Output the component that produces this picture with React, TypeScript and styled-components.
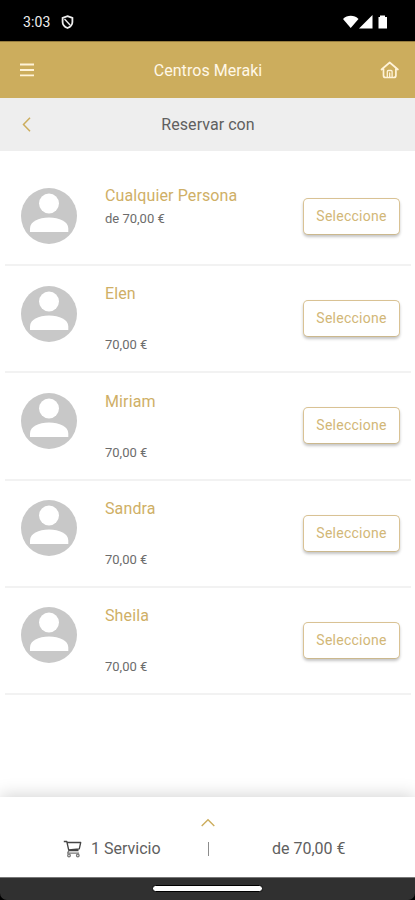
import React from "react";
import styled, { createGlobalStyle } from "styled-components";

const GlobalStyle = createGlobalStyle`
  * { box-sizing: border-box; }
  body { margin: 0; background: #fff; font-family: Roboto, "Liberation Sans", sans-serif; }
`;

const gold = "#ccad5d";
const goldText = "#cfaf66";

const Screen = styled.div`
  width: 415px;
  height: 900px;
  display: flex;
  flex-direction: column;
  background: #fff;
  overflow: hidden;
`;

const StatusBar = styled.div`
  height: 41px;
  flex: none;
  display: flex;
  align-items: center;
  padding: 2px 26px 0 23px;
  background: #000;
  color: #fff;
`;

const Clock = styled.span`
  width: 38px;
  font-size: 14px;
  line-height: 16px;
  letter-spacing: 0.1px;
  color: #eee;
`;

const StatusIcons = styled.div`
  display: flex;
  align-items: center;
  margin-left: auto;
`;

const TopBar = styled.header<{ $tone: "gold" | "grey" }>`
  height: ${(p) => (p.$tone === "gold" ? 57 : 53)}px;
  flex: none;
  display: grid;
  grid-template-columns: 61px 1fr 60px;
  align-items: center;
  background: ${(p) => (p.$tone === "gold" ? gold : "#eeeeee")};
  border-top: ${(p) => (p.$tone === "gold" ? "1px solid #967d40" : "none")};
  color: ${(p) => (p.$tone === "gold" ? "#fff8e8" : "#606060")};
`;

const Title = styled.h1`
  margin: 0;
  padding-top: 1px;
  font-size: 16px;
  font-weight: 400;
  line-height: 20px;
  text-align: center;
  letter-spacing: 0.05px;
`;

const IconSlot = styled.span<{ $left: number }>`
  display: flex;
  padding-left: ${(p) => p.$left}px;
`;

const List = styled.ul`
  flex: 1;
  margin: 0;
  padding: 17px 4px 0 5px;
  list-style: none;
`;

const Row = styled.li<{ $short?: boolean }>`
  height: ${(p) => (p.$short ? 98 : 107.3)}px;
  display: grid;
  grid-template-columns: 84px 1fr 97px;
  padding: 0 11px 0 16px;
  border-bottom: 2px solid #f2f2f2;
`;

const AvatarIcon = styled.svg`
  display: block;
  width: 56px;
  height: 56px;
  margin-top: 19.5px;
`;

const Info = styled.div`
  display: flex;
  flex-direction: column;
  padding-top: 18.4px;
`;

const Name = styled.span`
  font-size: 16px;
  line-height: 20px;
  letter-spacing: 0.12px;
  color: ${goldText};
`;

const Price = styled.span<{ $gap: number }>`
  margin-top: ${(p) => p.$gap}px;
  font-size: 13px;
  line-height: 16px;
  color: #6c6c6c;
`;

const SelectButton = styled.button`
  align-self: center;
  height: 37px;
  padding: 0 0 1px;
  border: 1px solid #d9c294;
  border-bottom-color: #cbb88d;
  border-radius: 5px;
  background: #fff;
  box-shadow: 0 2px 3px rgba(0, 0, 0, 0.23);
  font-family: inherit;
  font-size: 14px;
  letter-spacing: 0.25px;
  color: #d2b777;
`;

const Cart = styled.footer`
  height: 80px;
  flex: none;
  display: flex;
  flex-direction: column;
  align-items: center;
  padding-top: 21px;
  background: #fff;
  box-shadow: 0 -2px 16px rgba(0, 0, 0, 0.17);
`;

const Summary = styled.div`
  width: 100%;
  display: grid;
  grid-template-columns: 197px 23px 1fr;
  align-items: center;
  margin-top: 12px;
  font-size: 16px;
  line-height: 20px;
  color: #606060;
`;

const Services = styled.span`
  display: flex;
  align-items: center;
  gap: 9px;
  padding-left: 63px;
`;

const Divider = styled.span`
  justify-self: center;
  width: 1px;
  height: 14px;
  background: #8c8c8c;
`;

const Total = styled.span`
  padding-left: 52px;
`;

const NavBar = styled.div`
  height: 23px;
  display: flex;
  justify-content: center;
  padding-top: 8px;
  background: linear-gradient(#777 0 1px, #303030 1px);
  border-radius: 0 0 7px 7px;
`;

const NavBack = styled.div`
  flex: none;
  background: #000;
`;

const HomePill = styled.div`
  width: 111px;
  height: 7px;
  border: 1px solid #000;
  border-radius: 4px;
  background: #fff;
`;

function Avatar() {
  return (
    <AvatarIcon viewBox="0 0 56 56">
      <circle cx="28" cy="28" r="28" fill="#c8c8c8" />
      <circle cx="28" cy="15.500" r="10" fill="#fff" />
      <path d="M9 44v-3.500C9 33.500 17.500 29.500 28 29.500s19.300 4 19.300 11V44z" fill="#fff" />
    </AvatarIcon>
  );
}

const people = [
  { name: "Cualquier Persona", price: "de 70,00 €", any: true },
  { name: "Elen", price: "70,00 €" },
  { name: "Miriam", price: "70,00 €" },
  { name: "Sandra", price: "70,00 €" },
  { name: "Sheila", price: "70,00 €" },
];

export default function App() {
  return (
    <>
      <GlobalStyle />
      <Screen>
        <StatusBar>
          <Clock>3:03</Clock>
          <svg width="13" height="14" viewBox="0 0 13 14" fill="none" stroke="#eee" strokeWidth="1.800">
            <path d="M6.500 1.200 11.400 3v4c0 2.700-2 4.900-4.900 6C3.600 11.900 1.600 9.700 1.600 7V3z" />
            <path d="m3.500 4 5.600 6" strokeWidth="1.400" />
          </svg>
          <StatusIcons>
            <svg width="46" height="14" viewBox="0 0 46 14" fill="#fff">
              <path d="M0 4C4-.2 11.500-.2 15.500 4L7.700 13z" />
              <path d="M16 13.500 29.500 0v13.500z" />
              <path d="M35.500 2h1.500V.5h5V2h2v11.500h-8.500z" />
            </svg>
          </StatusIcons>
        </StatusBar>
        <TopBar $tone="gold">
          <IconSlot $left={20}>
            <svg width="14" height="14" viewBox="0 0 14 14" stroke="#fff3d8" strokeWidth="1.800">
              <path d="M0 1.500h14M0 7h14M0 12.400h14" />
            </svg>
          </IconSlot>
          <Title>Centros Meraki</Title>
          <IconSlot $left={25}>
            <svg width="20" height="18" viewBox="0 0 20 18" fill="none" stroke="#fff3d8" strokeWidth="1.700" strokeLinejoin="round" strokeLinecap="round">
              <path d="M1.500 8.500 9.700 1.500l8.200 7M3.500 8v6.500a2 2 0 0 0 2 2h8.400a2 2 0 0 0 2-2V8" />
              <path d="M7.300 16V10.500c0-.8.400-1 1-1h2.800c.6 0 1 .2 1 1V16M9.700 12v4" strokeWidth="1.300" />
            </svg>
          </IconSlot>
        </TopBar>
        <TopBar $tone="grey">
          <IconSlot $left={22}>
            <svg width="9" height="15" viewBox="0 0 9 15" fill="none" stroke={gold} strokeWidth="1.500">
              <path d="M8 .8 1.500 7.500 8 14.200" />
            </svg>
          </IconSlot>
          <Title>Reservar con</Title>
        </TopBar>
        <List>
          {people.map((p) => (
            <Row key={p.name} $short={p.any}>
              <Avatar />
              <Info>
                <Name>{p.name}</Name>
                <Price $gap={p.any ? 5 : 33}>{p.price}</Price>
              </Info>
              <SelectButton>Seleccione</SelectButton>
            </Row>
          ))}
        </List>
        <Cart>
          <svg width="14" height="9" viewBox="0 0 14 9" fill="none" stroke={gold} strokeWidth="1.400">
            <path d="M.7 8 7 1.800 13.300 8" />
          </svg>
          <Summary>
            <Services>
              <svg width="19" height="18" viewBox="0 0 19 18" fill="none" stroke="#444" strokeWidth="1.300" strokeLinejoin="round">
                <path d="M.8 1.500h3l2 9h9.700M4 2.500h13.700l-1.400 6.300-10.700 1.200" />
                <path d="M5.800 10.500 4.600 13.200h11.500" stroke="#777" />
                <circle cx="6" cy="15.500" r="1.300" stroke="#777" />
                <circle cx="14.800" cy="15.500" r="1.300" stroke="#777" />
              </svg>
              1 Servicio
            </Services>
            <Divider />
            <Total>de 70,00 €</Total>
          </Summary>
        </Cart>
        <NavBack>
          <NavBar>
            <HomePill />
          </NavBar>
        </NavBack>
      </Screen>
    </>
  );
}
